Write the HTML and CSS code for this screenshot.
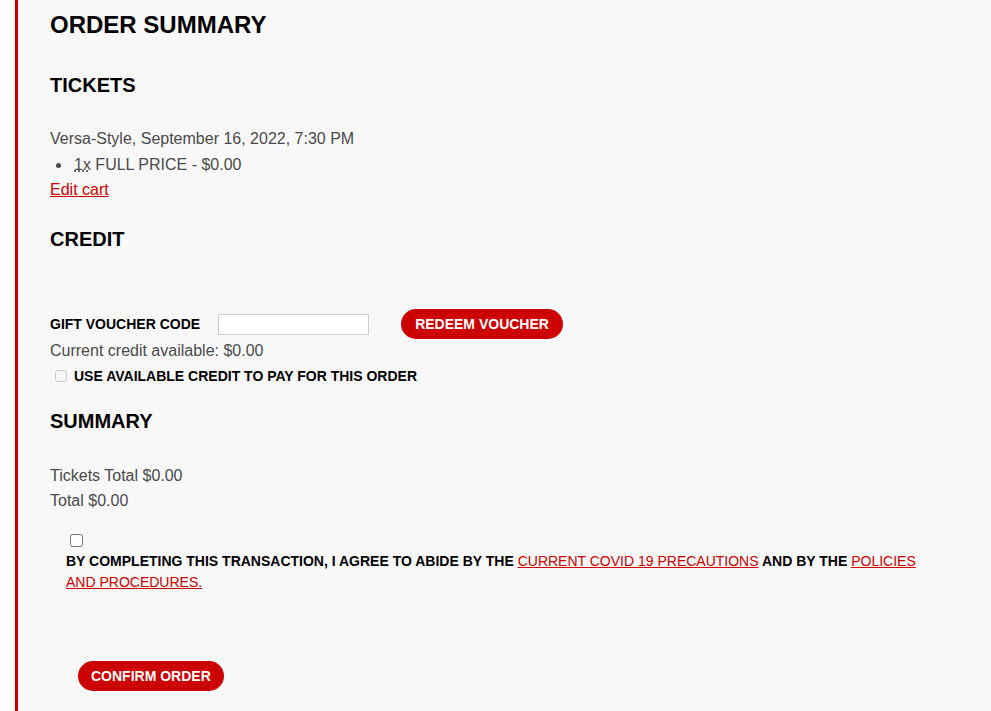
FILE: index.html
```html
<!DOCTYPE html>
<html lang="en">
<head>
  <meta charset="UTF-8">
  <meta name="viewport" content="width=device-width, initial-scale=1.0">
  <title>Order Summary</title>
  <link rel="stylesheet" href="styles.css">
</head>
<body>

<div class="order-container">
  <h1>Order Summary</h1>

  <h2 class="tickets-title">Tickets</h2>
  <div class="event-name">Versa-Style, September 16, 2022, 7:30 PM</div>
  <ul class="ticket-list">
    <li><abbr title="quantity">1x</abbr> FULL PRICE - $0.00</li>
  </ul>
  <a href="#" class="edit-cart">Edit cart</a>

  <h2 class="credit-title">Credit</h2>
  <div class="voucher-row">
    <label for="voucher">Gift voucher code</label>
    <input type="text" id="voucher">
    <button class="red-btn redeem-btn">Redeem voucher</button>
  </div>
  <div class="credit-line">Current credit available: $0.00</div>
  <div class="use-credit">
    <input type="checkbox" id="useCredit" disabled>
    <label for="useCredit">Use available credit to pay for this order</label>
  </div>

  <h2 class="summary-title">Summary</h2>
  <div class="totals">
    <div>Tickets Total $0.00</div>
    <div>Total $0.00</div>
  </div>

  <div class="agree">
    <input type="checkbox" id="agree">
    <label for="agree">By completing this transaction, I agree to abide by the <a href="#">Current COVID 19 Precautions</a> and by the <a href="#">Policies and Procedures.</a></label>
  </div>

  <button class="red-btn confirm-btn">Confirm order</button>
</div>

</body>
</html>
```

FILE: styles.css
```css
body {
  font-family: "Liberation Sans", Arial, sans-serif;
  margin: 0;
  padding: 0 0 0 15px;
  background-color: #fff;
  color: #4a4a4a;
}

.order-container {
  border-left: 3px solid #c00;
  background-color: #f8f8f8;
  padding: 10px 32px 20px 32px;
  min-height: 100vh;
  box-sizing: border-box;
}

h1,
h2 {
  color: #000;
  text-transform: uppercase;
  font-weight: bold;
  margin: 0;
}

h1 {
  font-size: 24px;
  line-height: 30px;
}

h2 {
  font-size: 20px;
  line-height: 24px;
}

.tickets-title {
  margin-top: 33px;
}

.event-name {
  margin-top: 29px;
  font-size: 16px;
  line-height: 25px;
}

.ticket-list {
  margin: 0;
  padding: 1px 0 0 22px;
  font-size: 16px;
  line-height: 25px;
}

.ticket-list abbr {
  text-decoration: underline dotted;
  padding-left: 2px;
}

.edit-cart {
  display: block;
  color: #c00;
  font-size: 16px;
  line-height: 25px;
}

.credit-title {
  margin-top: 25px;
}

.voucher-row {
  margin-top: 58px;
  display: flex;
  align-items: center;
  height: 30px;
}

.voucher-row label {
  color: #000;
  font-weight: bold;
  font-size: 14px;
  text-transform: uppercase;
}

.voucher-row input {
  margin-left: 18px;
  width: 151px;
  height: 21px;
  border: 1px solid #ccc;
  background-color: #fff;
  box-sizing: border-box;
  padding: 2px 4px;
}

.red-btn {
  background-color: #c00;
  color: #fff;
  border: none;
  border-radius: 15px;
  height: 30px;
  padding: 0 14px;
  font-family: "Liberation Sans", Arial, sans-serif;
  font-weight: bold;
  font-size: 14px;
  text-transform: uppercase;
  cursor: pointer;
}

.redeem-btn {
  margin-left: 32px;
}

.credit-line {
  font-size: 16px;
  line-height: 25px;
  margin-top: -1px;
}

.use-credit {
  display: flex;
  align-items: center;
  height: 25px;
}

.use-credit input {
  margin: 0 7px 0 5px;
  width: 12px;
  height: 12px;
}

.use-credit label {
  color: #000;
  font-weight: bold;
  font-size: 14px;
  text-transform: uppercase;
}

.summary-title {
  margin-top: 21px;
}

.totals {
  margin-top: 30px;
  font-size: 16px;
  line-height: 25px;
}

.agree {
  margin-top: 21px;
  padding-left: 16px;
  padding-right: 40px;
}

.agree input {
  display: block;
  margin: 0 0 4px 4px;
  width: 13px;
  height: 13px;
}

.agree label {
  display: block;
  color: #000;
  font-weight: bold;
  font-size: 14px;
  line-height: 21px;
  text-transform: uppercase;
}

.agree a {
  color: #c00;
  font-weight: normal;
}

.confirm-btn {
  display: block;
  margin: 68px 0 0 28px;
  padding: 0 13px;
}
```
